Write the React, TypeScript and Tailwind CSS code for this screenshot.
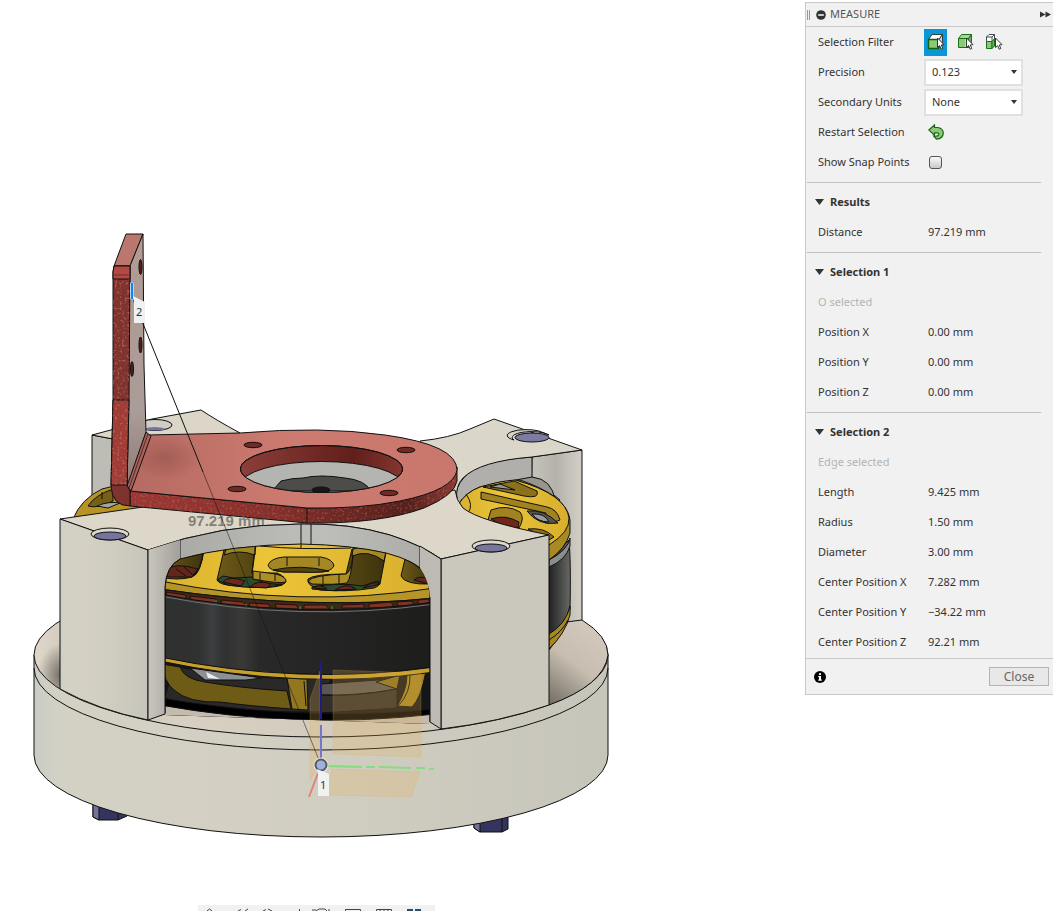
import { useState } from "react";
import type { ReactNode } from "react";

const CURSOR = "M11.500 6 V15.500 L13.600 13.600 L15.200 17.200 L16.800 16.500 L15.300 13 L18 12.600 Z";

function BodyFilterIcon() {
  return (
    <svg viewBox="0 0 20 20" className="size-5">
      <path d="M2.500 7.500 L6 2.500 H16.500 L13 7.500 Z" fill="#fff" stroke="#33413f" />
      <path d="M13 7.500 L16.500 2.500 V11 L13 15.500 Z" fill="#cfd6d6" stroke="#33413f" />
      <path d="M2.500 7.500 H12.500 V16.500 H2.500 Z" fill="#8cc878" stroke="#0b6608" strokeWidth="1.400" />
      <path d={CURSOR} fill="#fff" stroke="#222" strokeWidth=".9" />
    </svg>
  );
}

function FaceFilterIcon() {
  return (
    <svg viewBox="0 0 20 20" className="size-5">
      <path d="M3.500 6.500 L6.500 2.500 H16.500 L13.500 6.500 Z" fill="#a6d693" stroke="#177414" />
      <path d="M13.500 6.500 L16.500 2.500 V11 L13.500 15.500 Z" fill="#6fb05c" stroke="#177414" />
      <path d="M3.500 6.500 H13.500 V15.500 H3.500 Z" fill="#8cc878" stroke="#177414" />
      <path d="M10.500 7 H13 V15 H10.500 Z" fill="#e4f3de" />
      <path d={CURSOR} fill="#fff" stroke="#222" strokeWidth=".9" />
    </svg>
  );
}

function ComponentFilterIcon() {
  return (
    <svg viewBox="0 0 20 20" className="size-5">
      <path d="M2.500 5 L5 2.500 H10.500 V7 L8 9.500 H2.500 Z" fill="#fff" stroke="#444b52" />
      <path d="M2.500 5 H8 V9.500 M8 5 L10.500 2.500" fill="none" stroke="#444b52" />
      <path d="M2.500 9.500 H8 V16.500 H2.500 Z" fill="#8cc878" stroke="#177414" />
      <path d="M8 9.500 L10.500 7 V14 L8 16.500 Z" fill="#6fb05c" stroke="#177414" />
      <path d={CURSOR} fill="#fff" stroke="#222" strokeWidth=".9" />
    </svg>
  );
}

function RestartIcon() {
  return (
    <svg viewBox="0 0 16 16" className="size-4">
      <path
        d="M.8 6 L6.500 1 V3.500 H10 Q15.300 4.500 15.300 9.400 Q14.800 14.900 8.500 15.200 L5.800 12.200 Q10.800 12.600 10.900 10.200 Q10.700 8.800 8.800 8.800 H6.500 V11.200 Z"
        fill="#8cc878"
        stroke="#17690f"
        strokeWidth="1.200"
      />
    </svg>
  );
}

function Row({ label, children }: { label: string; children: ReactNode }) {
  return (
    <div className="grid h-[30px] grid-cols-[106px_1fr] items-center pl-[11px]">
      <dt className="whitespace-nowrap">{label}</dt>
      <dd>{children}</dd>
    </div>
  );
}

function SelectRow({ label, id, options }: { label: string; id: string; options: string[] }) {
  return (
    <div className="grid h-[30px] grid-cols-[106px_1fr] items-center pl-[11px]">
      <label htmlFor={id}>{label}</label>
      <div className="relative w-[99px]">
        <select
          id={id}
          className="h-[27px] w-full appearance-none border-2 border-[#e0e0e0] bg-white pl-1.5"
        >
          {options.map((o) => (
            <option key={o}>{o}</option>
          ))}
        </select>
        <svg viewBox="0 0 6 4" className="pointer-events-none absolute top-[11px] right-1.5 h-1 w-1.5">
          <path d="M0 0 H6 L3 4 Z" fill="#333" />
        </svg>
      </div>
    </div>
  );
}

function Section({
  title,
  note,
  values,
  last = false,
}: {
  title: string;
  note?: string;
  values: [string, string][];
  last?: boolean;
}) {
  const [open, setOpen] = useState(true);
  return (
    <section className={last ? "mr-3 ml-px pt-1 pb-px" : "mr-3 ml-px border-b border-[#c2c2c2] pt-1 pb-[5px]"}>
      <h2>
        <button
          type="button"
          aria-expanded={open}
          onClick={() => setOpen(!open)}
          className="flex h-[30px] items-center gap-1.5 pl-2 font-bold"
        >
          <svg viewBox="0 0 9 6" className={open ? "h-1.5 w-[9px]" : "h-1.5 w-[9px] -rotate-90"}>
            <path d="M0 0 H9 L4.500 6 Z" fill="#333" />
          </svg>
          {title}
        </button>
      </h2>
      {open && note && <p className="flex h-[30px] items-center pl-[11px] text-[#b4b4b4]">{note}</p>}
      {open && (
        <dl>
          {values.map(([k, v]) => (
            <Row key={k} label={k}>
              <span className="pl-1 whitespace-nowrap">{v}</span>
            </Row>
          ))}
        </dl>
      )}
    </section>
  );
}

function MeasurePanel() {
  const [filter, setFilter] = useState(0);
  const filters: [string, ReactNode][] = [
    ["Select face, edge or vertex", <BodyFilterIcon key="b" />],
    ["Select body", <FaceFilterIcon key="f" />],
    ["Select component", <ComponentFilterIcon key="c" />],
  ];
  return (
    <aside className="mt-0.5 w-[248px] shrink-0 self-start border-t border-b border-l border-[#c8c8c8] bg-[#f1f1f1] font-['Noto_Sans','Open_Sans',sans-serif] text-[11px] text-[#333]">
      <header className="flex h-6 items-center border-b border-[#c8c8c8] pr-0.5 pl-px">
        <span className="h-2.5 w-[3px] border-r border-l border-[#999]" />
        <button type="button" aria-label="Collapse" className="ml-1.5">
          <svg viewBox="0 0 10 10" className="size-2.5">
            <circle cx="5" cy="5" r="4.800" fill="#333" />
            <path d="M2.200 5 H7.800" stroke="#fff" strokeWidth="1.500" />
          </svg>
        </button>
        <h1 className="ml-1 text-[#555]">MEASURE</h1>
        <button type="button" aria-label="Dock panel" className="ml-auto">
          <svg viewBox="0 0 11 7" className="h-[7px] w-[11px]">
            <path d="M0 .5 L5.500 3.500 L0 6.500 Z M5.500 .5 L11 3.500 L5.500 6.500 Z" fill="#333" />
          </svg>
        </button>
      </header>
      <section className="mr-3 ml-px border-b border-[#c2c2c2] pb-[5px]">
        <div className="grid h-[30px] grid-cols-[106px_1fr] items-center pl-[11px]">
          <span>Selection Filter</span>
          <div className="flex gap-1.5">
            {filters.map(([name, icon], i) => (
              <button
                key={name}
                type="button"
                aria-label={name}
                aria-pressed={filter === i}
                onClick={() => setFilter(i)}
                className={
                  filter === i
                    ? "flex h-[27px] w-[23px] items-center justify-center bg-[#0a96d7]"
                    : "flex h-[27px] w-[23px] items-center justify-center"
                }
              >
                {icon}
              </button>
            ))}
          </div>
        </div>
        <SelectRow id="precision" label="Precision" options={["0.123", "0.12", "0.1"]} />
        <SelectRow id="units" label="Secondary Units" options={["None", "Inch", "Foot"]} />
        <div className="grid h-[30px] grid-cols-[106px_1fr] items-center pl-[11px]">
          <span>Restart Selection</span>
          <button type="button" aria-label="Restart Selection" className="w-6 pl-1">
            <RestartIcon />
          </button>
        </div>
        <div className="grid h-[30px] grid-cols-[106px_1fr] items-center pl-[11px]">
          <label htmlFor="snap">Show Snap Points</label>
          <input
            id="snap"
            type="checkbox"
            className="ml-[5px] size-[13px] appearance-none rounded-[3px] border border-[#555] bg-linear-to-b from-[#fafafa] to-[#c9c9c9] checked:from-[#0a96d7] checked:to-[#0a96d7]"
          />
        </div>
      </section>
      <Section title="Results" values={[["Distance", "97.219 mm"]]} />
      <Section
        title="Selection 1"
        note="O selected"
        values={[
          ["Position X", "0.00 mm"],
          ["Position Y", "0.00 mm"],
          ["Position Z", "0.00 mm"],
        ]}
      />
      <Section
        last
        title="Selection 2"
        note="Edge selected"
        values={[
          ["Length", "9.425 mm"],
          ["Radius", "1.50 mm"],
          ["Diameter", "3.00 mm"],
          ["Center Position X", "7.282 mm"],
          ["Center Position Y", "−34.22 mm"],
          ["Center Position Z", "92.21 mm"],
        ]}
      />
      <footer className="flex h-9 items-center justify-between border-t border-[#c8c8c8] pr-1 pl-2">
        <button type="button" aria-label="Information">
          <svg viewBox="0 0 12 12" className="size-3">
            <circle cx="6" cy="6" r="6" fill="#000" />
            <path d="M5 2.200 H7 V4 H5 Z M4.300 5 H7 V8.600 H7.800 V9.800 H4.300 V8.600 H5 V6.200 H4.300 Z" fill="#fff" />
          </svg>
        </button>
        <button type="button" className="h-[19px] w-[60px] border border-[#b4b4b4] bg-[#e8e8e8] text-xs leading-none text-[#666]">
          Close
        </button>
      </footer>
    </aside>
  );
}

function ModelView() {
  return (
    <svg viewBox="0 0 805 905" className="block h-auto w-full" role="img" aria-label="Motor mount assembly">
      <defs>
        <linearGradient id="base" x1="0" x2="1">
          <stop offset="0" stopColor="#c9ccc6" />
          <stop offset=".04" stopColor="#d3d1c5" />
          <stop offset=".35" stopColor="#d3d0c3" />
          <stop offset=".8" stopColor="#cbc9bd" />
          <stop offset="1" stopColor="#c6c5ba" />
        </linearGradient>
        <linearGradient id="floor" x1="0" x2="1">
          <stop offset="0" stopColor="#dfd8ca" />
          <stop offset=".1" stopColor="#c9c1b4" />
          <stop offset=".25" stopColor="#d8d0c2" />
          <stop offset=".7" stopColor="#cfc8ba" />
          <stop offset=".87" stopColor="#a9a195" />
          <stop offset="1" stopColor="#d3c9bc" />
        </linearGradient>
        <linearGradient id="rightFloor" x1=".1" y1="1" x2=".6" y2="0">
          <stop offset="0" stopColor="#777167" />
          <stop offset=".5" stopColor="#c7beb1" />
          <stop offset="1" stopColor="#d3c9bd" />
        </linearGradient>
        <radialGradient id="floorShade">
          <stop offset="0" stopColor="#4d4840" stopOpacity=".75" />
          <stop offset="1" stopColor="#4d4840" stopOpacity="0" />
        </radialGradient>
        <linearGradient id="postSide" x1="0" x2="1">
          <stop offset="0" stopColor="#c8c6bd" />
          <stop offset="1" stopColor="#a3a09a" />
        </linearGradient>
        <linearGradient id="arch" x1="0" x2="1">
          <stop offset="0" stopColor="#c8c7c1" />
          <stop offset=".12" stopColor="#aaaaa6" />
          <stop offset=".45" stopColor="#b9b9b6" />
          <stop offset=".6" stopColor="#bdbdba" />
          <stop offset="1" stopColor="#aaa9a4" />
        </linearGradient>
        <linearGradient id="wall" x1="0" x2="1">
          <stop offset="0" stopColor="#c6c5bc" />
          <stop offset=".5" stopColor="#b4b2aa" />
          <stop offset="1" stopColor="#d2d0c6" />
        </linearGradient>
        <linearGradient id="can" x1="0" x2="1">
          <stop offset="0" stopColor="#2e2f2e" />
          <stop offset=".14" stopColor="#303131" />
          <stop offset=".19" stopColor="#3b3f3f" />
          <stop offset=".24" stopColor="#303131" />
          <stop offset=".3" stopColor="#393936" />
          <stop offset=".36" stopColor="#292929" />
          <stop offset="1" stopColor="#1d1d1c" />
        </linearGradient>
        <linearGradient id="canRight" x1="0" x2="1">
          <stop offset="0" stopColor="#222" />
          <stop offset="1" stopColor="#686867" />
        </linearGradient>
        <linearGradient id="gold" x1="0" x2="1">
          <stop offset="0" stopColor="#d9b22f" />
          <stop offset=".4" stopColor="#ebc437" />
          <stop offset="1" stopColor="#d8ae2d" />
        </linearGradient>
        <linearGradient id="goldDark" x1="0" x2="1">
          <stop offset="0" stopColor="#6e5b18" />
          <stop offset="1" stopColor="#3c320d" />
        </linearGradient>
        <linearGradient id="plate" x1="0" x2="1">
          <stop offset="0" stopColor="#b66a61" />
          <stop offset=".5" stopColor="#cd7b71" />
          <stop offset="1" stopColor="#c9766d" />
        </linearGradient>
        <linearGradient id="plateSide" x1="0" x2="1">
          <stop offset="0" stopColor="#9c3833" />
          <stop offset=".45" stopColor="#84302b" />
          <stop offset=".85" stopColor="#55201c" />
          <stop offset="1" stopColor="#8a3b35" />
        </linearGradient>
        <linearGradient id="boreWall" x1="0" x2="1">
          <stop offset="0" stopColor="#8d3f39" />
          <stop offset=".3" stopColor="#79302b" />
          <stop offset=".7" stopColor="#611f1b" />
          <stop offset="1" stopColor="#85362f" />
        </linearGradient>
        <linearGradient id="upright" x1="0" y1="0" x2="0" y2="1">
          <stop offset="0" stopColor="#b29a93" />
          <stop offset=".7" stopColor="#aa9c98" />
          <stop offset="1" stopColor="#8f7772" />
        </linearGradient>
        <radialGradient id="smudge">
          <stop offset="0" stopColor="#6f3a34" stopOpacity=".32" />
          <stop offset="1" stopColor="#6f3a34" stopOpacity="0" />
        </radialGradient>
        <filter id="speckle" x="0" y="0" width="1" height="1">
          <feTurbulence type="fractalNoise" baseFrequency=".4" numOctaves="2" seed="4" />
          <feColorMatrix values="0 0 0 0 .62  0 0 0 0 .18  0 0 0 0 .15  0 0 0 5 -2.7" />
          <feComposite in2="SourceGraphic" operator="in" />
        </filter>
        <clipPath id="window">
          <path d="M165 715 V587 Q166 566 180 559 Q230 545 301 544 Q352 545 386 553 Q416 561 424 572 Q429 580 430 597 V724 Z" />
        </clipPath>
        <clipPath id="bore">
          <ellipse cx="321.500" cy="469" rx="81" ry="23.500" />
        </clipPath>
        <clipPath id="floorClip">
          <ellipse cx="321" cy="655" rx="287" ry="82" />
        </clipPath>
      </defs>

      <g stroke="#111" strokeWidth="1" strokeLinejoin="round">
        {/* bolts under the base */}
        <path d="M93 800 V817 L99 820 H118 L127 816 V800 Z" fill="#34345f" />
        <path d="M93 800 V817 L99 820 V800 Z" fill="#73739a" />
        <path d="M118 800 V820" fill="none" />
        <path d="M474 815 V828 L480 832 H502 L508 829 V812 Z" fill="#34345f" />
        <path d="M474 815 V828 L480 832 V815 Z" fill="#73739a" />
        <path d="M502 815 V832" fill="none" />

        {/* round base */}
        <path d="M34 655 V755 A287 82 0 0 0 608 755 V655 Z" fill="url(#base)" />
        <path d="M34 668 A287 82 0 0 0 608 668" fill="none" />
        <ellipse cx="321" cy="655" rx="287" ry="82" fill="url(#floor)" />
        <ellipse cx="62" cy="675" rx="24" ry="32" fill="url(#floorShade)" stroke="none" clipPath="url(#floorClip)" />
        <path d="M549 705 V615 L582 620 Q608 636 608 655 Q604 685 549 705 Z" fill="url(#rightFloor)" stroke="none" />
        <path d="M582 620 Q608 636 608 655 Q604 685 549 705" fill="none" />

        {/* rear blocks */}
        <path d="M92 435 L113 439 V530 H92 Z" fill="#bdbdb5" />
        <path d="M92 435 L152 419 L201 410 Q216 420 240 433 L148 445 L113 439 Z" fill="#dbd6c8" />
        <ellipse cx="155" cy="425" rx="17" ry="5.500" fill="#d0cec4" />
        <path d="M143 429 Q154 425 167 429 Q155 432 143 429" fill="#74749f" stroke="none" />
        <path d="M532 457 L582 450 V620 L566 622 L530 560 Z" fill="url(#wall)" />
        <path d="M456 505 Q452 480 480 466 Q500 459 532 457 V477 L560 500 L530 540 Z" fill="#b0afab" />
        <path d="M420 441 Q450 438 470 429 L494 419 L582 450 L532 457 Q480 461 463 478 Q455 486 457 500 L430 480 Z" fill="#dad6c9" />
        <path d="M514 440 A18 5.500 0 1 1 549 435 L539 431 A18 5.500 0 0 0 514 440 Z" fill="#d5d2c6" />
        <ellipse cx="532" cy="437.500" rx="17" ry="4.500" fill="#7c7ba2" />

        {/* motor seen at the right */}
        <path d="M532 477 Q552 479 555 500 L505 482 Z" fill="#96958f" />
        <path d="M549 560 L569 540 Q571 560 570 610 Q566 630 549 650 Z" fill="url(#canRight)" />
        <path d="M549 560 Q568 550 570 538 V546 Q566 560 549 567 Z" fill="#8b8d8e" />
        <path d="M549 634 Q566 624 570 606 V615 Q565 634 549 649 Z" fill="#a68820" />
        <path d="M549 640 Q562 632 568 620" fill="none" />
        <path d="M458 505 Q466 492 480 487 Q500 481 520 480 Q567 496 570 520 V533 Q566 548 549 560 L470 518 Z" fill="#a98a22" />
        <path d="M458 505 Q466 492 480 487 Q500 481 515 480 Q566 494 569 518 Q570 532 549 545 L535 534 L462 514 Z" fill="url(#gold)" />
        <path d="M481 492 L547 507 Q557 509 560 520 Q552 524 545 523 L546 513 L481 499 Z" fill="#a08320" />
        <path d="M483 487 L524 496 Q540 499 537 491 L514 481 Z" fill="#8c711b" />
        <path d="M490 487 L515 490 L500 484 Z" fill="#999" />
        <path d="M527 511 Q544 509 558 523 Q538 526 527 511 Z" fill="#55564f" />
        <path d="M532 514 Q545 513 549 522 Q538 522 532 514 Z" fill="#999b99" />
        <path d="M488 520 L491 510 Q507 504 520 512 Q525 518 519 528 Q502 528 488 520 Z" fill="#a08320" />
        <path d="M491 519 Q505 514 519 522 L518 528 Q503 527 491 519 Z" fill="#702719" />
        <path d="M528 529 Q544 527 554 537 L549 540 Z" fill="#8c721d" />
        <path d="M466 494 Q474 505 468 513" fill="none" />

        {/* motor seen at the left */}
        <path d="M73 519 Q81 499 102 489 L114 486 L130 505 L148 508 Z" fill="#b89425" />
        <path d="M88 506 Q95 495 113 489 V501 Q98 509 88 506 Z" fill="#766018" />
        <path d="M97 506 Q108 501 120 503 L108 508 Z" fill="#a5a6a3" />
        <path d="M102 499 V492" fill="none" />

        {/* front top surfaces */}
        <path
          d="M60 519 L150 506 L307 515 L455 490 Q456 500 463 508 Q479 521 549 535 L441 559 Q421 545 390 535 Q350 523 301 524 Q220 524 148 550 Z"
          fill="#ddd7c9"
        />
        <path d="M148 550 Q220 524 301 524 Q350 523 390 535 Q421 545 441 559 V610 H148 Z" fill="url(#arch)" />

        {/* motor through the front opening */}
        <g clipPath="url(#window)">
          <rect x="160" y="540" width="275" height="190" fill="#1f1b0a" />
          <path d="M155 560 Q300 526 440 560 V594 Q310 608 160 584 Z" fill="url(#gold)" />
          <path d="M160 581 Q300 609 435 588 V598 Q310 611 160 589 Z" fill="#b5952a" />
          <path d="M160 589 Q310 611 435 598 V606 Q300 618 160 597 Z" fill="#3b2a16" />
          <path
            d="M166 592 L186 595 V599 L167 596 Z M190 596 L216 599 V603 L191 600 Z M221 600 L243 602 L247 606 L222 604 Z M249 603 L268 604 L271 608 L250 607 Z M275 604 L296 605 L299 609 L276 608 Z M304 605 H326 L329 609 H304 Z M342 605 L364 604 V608 H342 Z M369 604 L391 602 L394 607 L369 608 Z M397 602 L412 601 L414 605 L398 606 Z M418 600 L429 599 V603 L418 604 Z"
            fill="#7e3324"
            stroke="#26100b"
          />
          <path d="M216 600 V604 M246 604 V607 M300 606 V609 M332 606 V609" stroke="#3d6637" strokeWidth="2" />
          <path d="M160 564 L204 549 Q201 574 192 577 Q178 581 160 577 Z" fill="url(#goldDark)" />
          <path d="M166 570 Q174 562 198 569 L192 577 H166 Z" fill="#64261a" />
          <path d="M176 569 L186 576 M184 567 L193 575" fill="none" />
          <path d="M224 550 Q230 546 255 545 L252 573 H277 Q287 577 285 583 Q278 590 236 586 Q219 585 217 580 Z" fill="url(#goldDark)" />
          <path d="M224 555 Q239 549 255 555 V545 H228 Z" fill="#a28622" />
          <path d="M217 580 L223 576 L234 578 L252 577 L264 583 L282 585 Q258 590 228 585 Z" fill="#2d4b29" />
          <path d="M223 582 Q229 575 245 581 L241 586 Z M250 587 Q257 579 271 584 L267 588 Z" fill="#6c281a" />
          <path d="M253 571 L276 574 Q287 577 286 582 Q279 584 253 579 Z" fill="#ad8e25" />
          <path d="M284 557 H321 Q333 559 334 566 Q330 573 316 572 H284 Q269 571 268 565 Q271 558 284 557 Z" fill="#a38724" />
          <path d="M273 570 Q300 564 329 571 Q317 573 300 572 H284 Z" fill="#55450f" />
          <path d="M287 557 V566 M319 558 V566 M260 573 V580 M275 574 V581" fill="none" />
          <path d="M352 549 Q370 547 386 552 L380 584 Q350 593 320 590 Q306 585 308 579 Q314 574 346 574 Z" fill="url(#goldDark)" />
          <path d="M352 556 Q368 549 384 561 L386 551 Q364 545 353 549 Z" fill="#a68922" />
          <path d="M312 587 Q340 582 362 586 L378 581 Q382 585 374 588 Q345 593 312 589 Z" fill="#2d4b29" />
          <path d="M314 588 Q319 583 327 589 Z M335 590 Q347 582 356 589 Z M363 588 Q374 580 380 584 Z" fill="#6c281a" />
          <path d="M308 581 Q313 575 346 574 Q351 572 353 556 Q351 578 347 583 Q335 585 312 584 Z" fill="#ad8e25" />
          <path d="M323 576 V584 M339 575 V584 M301 543 V548" fill="none" />
          <path d="M405 559 Q425 568 431 584 Q405 585 401 576 Z" fill="url(#goldDark)" />
          <path d="M414 580 Q419 575 429 579 V584 Z" fill="#64261a" />
          <path d="M260 546 Q300 550 351 548 M256 545 L252 573 M204 549 Q201 570 192 577" fill="none" />

          <path d="M160 594 Q300 621 435 602 V670 Q300 687 160 658 Z" fill="url(#can)" />
          <path d="M160 596 Q300 623 435 604" fill="none" stroke="#707472" />
          <path d="M160 658 Q300 686 435 667 V724 H160 Z" fill="#151617" />
          <path d="M175 667 Q240 680 330 680 L325 711 Q220 713 165 698 Z" fill="#2a2928" stroke="none" />
          <path d="M190 668 L205 680 H246 L262 678 Z" fill="#8c9093" />
          <path d="M206 672 L220 679 L208 678 Z" fill="#eee" stroke="none" />
          <path d="M162 664 L180 667 Q184 679 205 682 Q240 688 287 691 L291 709 Q250 706 220 702 Q188 703 174 690 Q164 682 162 664 Z" fill="#6d5b16" />
          <path d="M287 678 L307 679 L308 710 L292 709 Z" fill="#927720" />
          <path d="M304 681 L306 706" fill="none" />
          <path d="M321 684 L378 680 L397 689 Q358 696 321 695 Z" fill="#585755" />
          <path d="M321 695 Q355 697 397 689 V708 L321 713 Z" fill="#332f2b" />
          <path d="M376 682 L400 675 L397 689 Z" fill="#8b701b" />
          <path d="M407 675 L426 671 Q421 698 412 707 L397 706 Q407 690 407 675 Z" fill="#a48522" />
          <path d="M410 674 Q411 693 398 706" fill="none" />
          <path d="M160 657 Q300 686 435 667 V672 Q300 691 160 661 Z" fill="#c6a02b" />
          <path d="M160 703 Q300 727 435 711 V730 H160 Z" fill="#c3bbae" stroke="none" />
          <path d="M160 698 Q300 722 435 709 V714 Q300 730 160 705 Z" fill="#000" />
        </g>
        <path d="M165 713 V587 Q166 566 180 559 Q230 545 301 544 Q352 545 386 553 Q416 561 424 572 Q429 580 430 597 V722" fill="none" />
        <path d="M180 540 V559 M301 524 V544 M311 524 V544 M420 546 V568" fill="none" />

        {/* front posts */}
        <path d="M60 519 L148 550 V720 Q98 710 60 689 Z" fill="url(#base)" />
        <path d="M148 550 L180 540 V559 Q166 566 165 587 V714 L148 720 Z" fill="url(#postSide)" stroke="none" />
        <path d="M148 550 V720 L165 714 V587 Q166 566 180 559" fill="none" />
        <path d="M441 559 L549 535 V705 Q500 722 441 729 Z" fill="#cac8bd" />
        <path d="M420 546 L441 559 V729 L430 722 V597 Q429 580 420 568 Z" fill="#bcbab3" stroke="none" />
        <path d="M420 546 L441 559 V729 L430 722 V597" fill="none" />
        <ellipse cx="110" cy="534" rx="19" ry="6" fill="#dcd7cb" />
        <ellipse cx="110" cy="536" rx="16" ry="4" fill="#74749c" />
        <ellipse cx="491" cy="546" rx="19" ry="6" fill="#dcd7cb" />
        <ellipse cx="491" cy="548" rx="16" ry="4" fill="#77779c" />

        {/* bracket plate */}
        <path d="M130 491 L307 508 Q380 508 424 492 Q457 478 457 467 V481 Q455 495 424 508 Q380 524 307 523 L130 506 Z" fill="url(#plateSide)" />
        <path d="M130 491 L307 508 Q380 508 424 492 Q457 478 457 467 V481 Q455 495 424 508 Q380 524 307 523 L130 506 Z" fill="#fff" stroke="none" filter="url(#speckle)" opacity=".35" />
        <path d="M148 435 L240 433 Q321 426 385 435 Q457 445 457 470 Q454 490 400 501 Q360 509 307 508 L130 491 Z" fill="url(#plate)" />
        <ellipse cx="166" cy="458" rx="36" ry="22" fill="url(#smudge)" stroke="none" />
        <path d="M307 508 V523" />
        <ellipse cx="321.500" cy="469" rx="81" ry="23.500" fill="url(#boreWall)" />
        <g clipPath="url(#bore)">
          <ellipse cx="321.500" cy="485" rx="81" ry="23.500" fill="#b4b5b0" />
          <path d="M274 489 L281 481 Q292 478 303 478 Q320 474 345 478 Q365 480 371 491 H274 Z" fill="#4c4c49" />
          <ellipse cx="321" cy="490" rx="9" ry="3" fill="#171717" />
        </g>
        <ellipse cx="321.500" cy="469" rx="81" ry="23.500" fill="none" />
        <g fill="#702923">
          <ellipse cx="253" cy="445" rx="9" ry="2.700" />
          <ellipse cx="406" cy="450" rx="9" ry="2.700" />
          <ellipse cx="237" cy="489" rx="9" ry="2.700" />
          <ellipse cx="389" cy="493" rx="9" ry="2.700" />
        </g>

        {/* bracket upright */}
        <path d="M126 234 H143 L130 266 H114 Z" fill="#b9776d" />
        <path d="M130 266 L143 234 L144 365 L146 432 L127 489 Z" fill="url(#upright)" />
        <path d="M146 432 L151 436 L131 491 L127 486 Z" fill="#a5635c" />
        <path d="M148 434 L129 488" fill="none" stroke="#5b2723" />
        <path d="M114 266 H130 L129 400 L127 485 L130 491 V506 Q112 506 111 486 L113 400 V272 Z" fill="#7f332e" />
        <path d="M113 400 H129 L127 485 H111 Z" fill="#a03c36" />
        <path d="M114 266 H130 V279 H113 V272 Z" fill="#b24a42" />
        <path d="M113 275 H130" stroke="#7a2924" />
        <path d="M113 279 H130 L129 400 L127 485 H111 L113 400 Z" fill="#fff" stroke="none" filter="url(#speckle)" opacity=".5" />
        <g fill="#54201d">
          <ellipse cx="140.500" cy="267" rx="1.500" ry="7.500" />
          <ellipse cx="140.500" cy="345" rx="1.500" ry="8" />
          <ellipse cx="132" cy="369" rx="1.500" ry="7.500" />
        </g>
      </g>

      {/* origin planes and axes */}
      <g fill="#e5ae52" fillOpacity=".24" stroke="#e0a94f" strokeOpacity=".2">
        <path d="M333 670 L421 673 V757 L333 754 Z" />
        <path d="M332 769 L420 772 L411 797 L327 795 Z" />
        <path d="M310 699 L320 671 V762 L310 781 Z" />
      </g>
      <path d="M321 662 V720" stroke="#211b86" strokeWidth="2" strokeDasharray="9 3 34 2" />
      <path d="M321 725 V759" stroke="#7974cb" strokeWidth="2" />
      <path d="M328 766 L362 767 M366 767 H375 M379 767 L411 768 M416 768 H425 M429 769 H434" stroke="#87dc80" strokeWidth="2" />
      <path d="M318 773 L309 797" stroke="#e18179" strokeWidth="2" />

      {/* measured distance */}
      <text x="188" y="526" fill="#333" fillOpacity=".55" className="font-['Liberation_Sans',sans-serif] text-[15px] font-bold">
        97.219 mm
      </text>
      <path d="M133 299 L203 472" stroke="#111" />
      <path d="M203 472 L321 765" stroke="#111" strokeOpacity=".65" strokeWidth=".8" />
      <rect x="130.500" y="282.500" width="3" height="17" rx="1" fill="#1683f1" stroke="#b9d6f1" />
      <path d="M133 296 L145 302 V323 H134 V302 Z" fill="#f1f1f1" />
      <circle cx="321" cy="765" r="7.500" fill="#f0e2d6" />
      <circle cx="321" cy="765" r="5.500" fill="#9eb3dc" stroke="#555a66" strokeWidth="2" />
      <path d="M317 769 L329 774 V796 H318 V773 Z" fill="#f1f1f1" />
      <g fill="#333" className="font-['Noto_Sans',sans-serif] text-[11px]">
        <text x="136" y="316">2</text>
        <text x="320" y="789">1</text>
      </g>
    </svg>
  );
}

function NavigationBar() {
  return (
    <nav aria-label="View navigation" className="ml-[198px] h-1.5 w-[237px] overflow-hidden bg-[#f1f1f1]">
      <svg viewBox="0 0 237 6" className="block h-1.5 w-[237px]" fill="none" stroke="#444">
        <path d="M9 6 L11.500 4 L14 6 M40 6 L43 4.500 M47 6 L50 4 M65 6 L68 4.500 M70 4 L74 6 M101.500 4 V6 M114 5 H118 M118 6 L121 4 H127 L129 6 M131 4 V6" />
        <path d="M147.500 6 V4.500 H162.500 V6 M178.500 6 V4.500 H193.500 V6 M182 4 V6 M186 4 V6 M190 4 V6" />
        <path d="M209 5 H215 M217 5 H223" stroke="#2c4b78" strokeWidth="2" />
      </svg>
    </nav>
  );
}

export default function App() {
  return (
    <div className="flex min-h-screen bg-white">
      <main className="min-w-0 flex-1">
        <ModelView />
        <NavigationBar />
      </main>
      <MeasurePanel />
    </div>
  );
}
